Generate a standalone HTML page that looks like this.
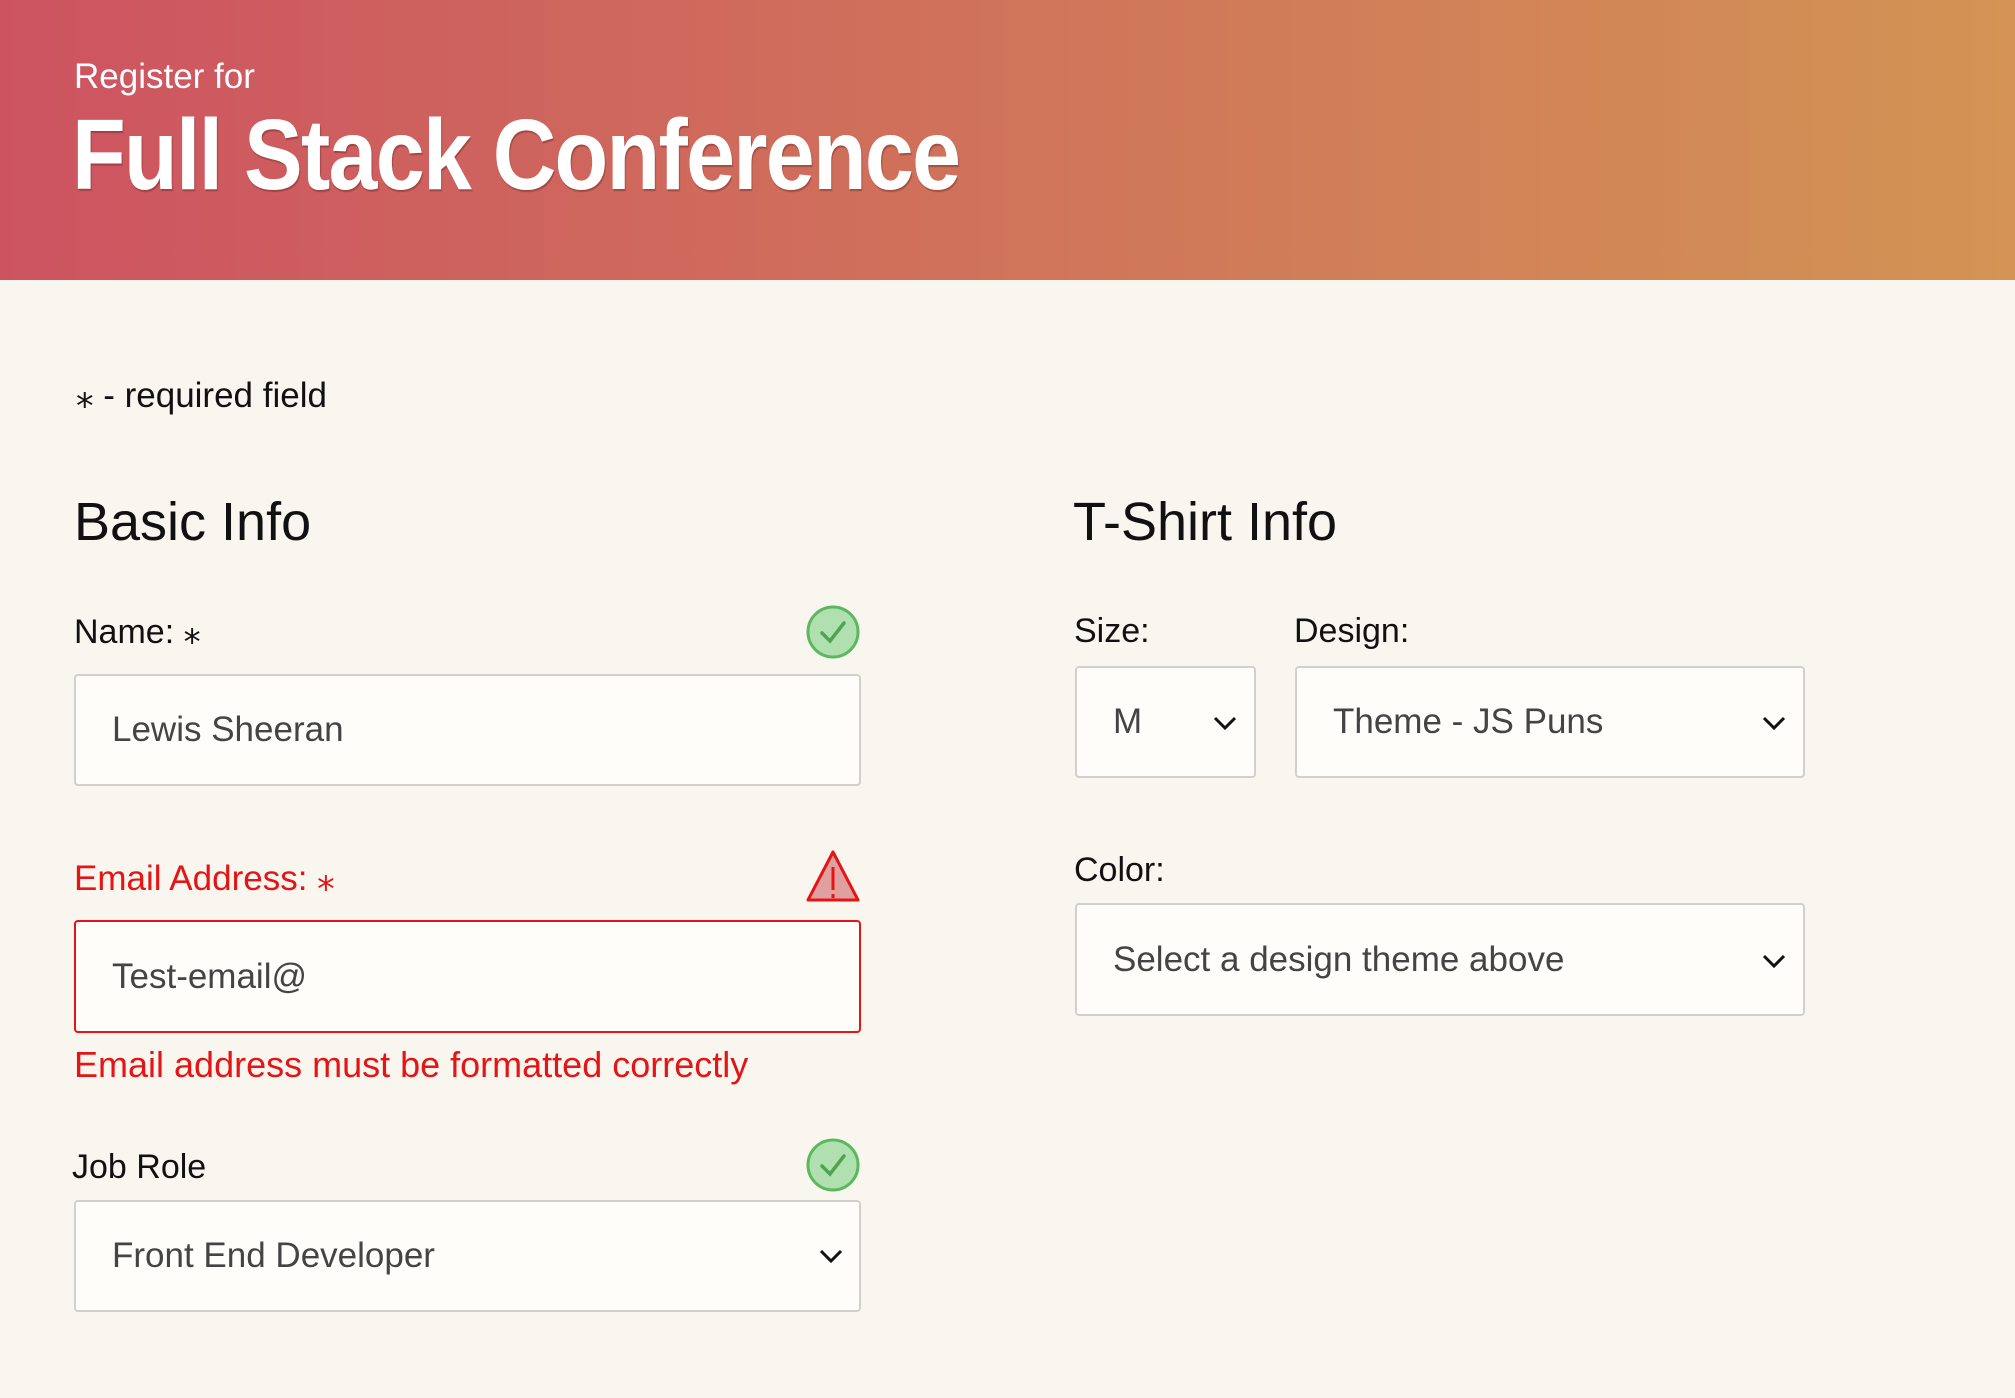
<!DOCTYPE html>
<html><head><meta charset="utf-8"><style>
*{box-sizing:border-box;margin:0;padding:0}
body{width:2015px;height:1398px;background:#f9f5ef;font-family:"Liberation Sans",sans-serif;position:relative;overflow:hidden;color:#111}
.hdr{position:absolute;left:0;top:0;width:2015px;height:280px;background:linear-gradient(90deg,#cd5361,#d39454)}
.a{position:absolute;white-space:nowrap}
.sub{left:74px;top:57px;font-size:35px;color:#fff}
.ttl{left:72px;top:98px;font-size:100px;font-weight:bold;color:#fff;letter-spacing:-2px;transform:scaleX(0.88);transform-origin:left;text-shadow:1px 2px 1px rgba(80,20,20,.35)}
.lbl{font-size:34px;color:#111}
.h2{font-size:54px;color:#111}
.box{position:absolute;background:#fffdf9;border:2px solid #d2d0cc;border-radius:4px;font-size:35px;color:#444;padding-left:34px;display:flex;align-items:center}
.red{color:#e31515}
.chev{position:absolute;width:26px;height:16px}
</style></head><body>
<div class="hdr"></div>
<div class="a sub">Register for</div>
<div class="a ttl">Full Stack Conference</div>

<div class="a lbl" style="left:76px;top:376px;font-size:35px">⁎ - required field</div>
<div class="a h2" style="left:74px;top:491px">Basic Info</div>
<div class="a h2" style="left:1073px;top:491px">T-Shirt Info</div>

<div class="a lbl" style="left:74px;top:612px">Name: ⁎</div>
<svg class="a" style="left:806px;top:605px" width="54" height="54" viewBox="0 0 54 54"><circle cx="27" cy="27" r="25" fill="#b0e0b0" stroke="#5cb85c" stroke-width="3"/><path d="M16 28 L24 36 L38 18" fill="none" stroke="#4fa44f" stroke-width="3.5" stroke-linecap="round"/></svg>
<div class="box" style="left:74px;top:674px;width:787px;height:112px;padding-left:36px">Lewis Sheeran</div>

<div class="a lbl red" style="left:74px;top:859px;font-size:35px">Email Address: ⁎</div>
<svg class="a" style="left:806px;top:849px" width="54" height="54" viewBox="0 0 54 54"><path d="M27 3 L52 51 L2 51 Z" fill="#e0a0a0" stroke="#e31515" stroke-width="3" stroke-linejoin="round"/><path d="M27 18 V41 M27 45 V49" stroke="#e31515" stroke-width="3"/></svg>
<div class="box" style="left:74px;top:920px;width:787px;height:113px;border-color:#e31515;padding-left:36px">Test-email@</div>
<div class="a red" style="left:74px;top:1044px;font-size:36px">Email address must be formatted correctly</div>

<div class="a lbl" style="left:72px;top:1148px">Job Role</div>
<svg class="a" style="left:806px;top:1138px" width="54" height="54" viewBox="0 0 54 54"><circle cx="27" cy="27" r="25" fill="#b0e0b0" stroke="#5cb85c" stroke-width="3"/><path d="M16 28 L24 36 L38 18" fill="none" stroke="#4fa44f" stroke-width="3.5" stroke-linecap="round"/></svg>
<div class="box" style="left:74px;top:1200px;width:787px;height:112px;padding-left:36px">Front End Developer</div>
<svg class="chev" style="left:818px;top:1248px" viewBox="0 0 26 16"><path d="M3 3 L13 13 L23 3" fill="none" stroke="#111" stroke-width="3"/></svg>

<div class="a lbl" style="left:1074px;top:612px">Size:</div>
<div class="a lbl" style="left:1294px;top:612px">Design:</div>
<div class="box" style="left:1075px;top:666px;width:181px;height:112px;padding-left:36px">M</div>
<svg class="chev" style="left:1212px;top:715px" viewBox="0 0 26 16"><path d="M3 3 L13 13 L23 3" fill="none" stroke="#111" stroke-width="3"/></svg>
<div class="box" style="left:1295px;top:666px;width:510px;height:112px;padding-left:36px">Theme - JS Puns</div>
<svg class="chev" style="left:1761px;top:715px" viewBox="0 0 26 16"><path d="M3 3 L13 13 L23 3" fill="none" stroke="#111" stroke-width="3"/></svg>

<div class="a lbl" style="left:1074px;top:851px">Color:</div>
<div class="box" style="left:1075px;top:903px;width:730px;height:113px;padding-left:36px">Select a design theme above</div>
<svg class="chev" style="left:1761px;top:953px" viewBox="0 0 26 16"><path d="M3 3 L13 13 L23 3" fill="none" stroke="#111" stroke-width="3"/></svg>
</body></html>
